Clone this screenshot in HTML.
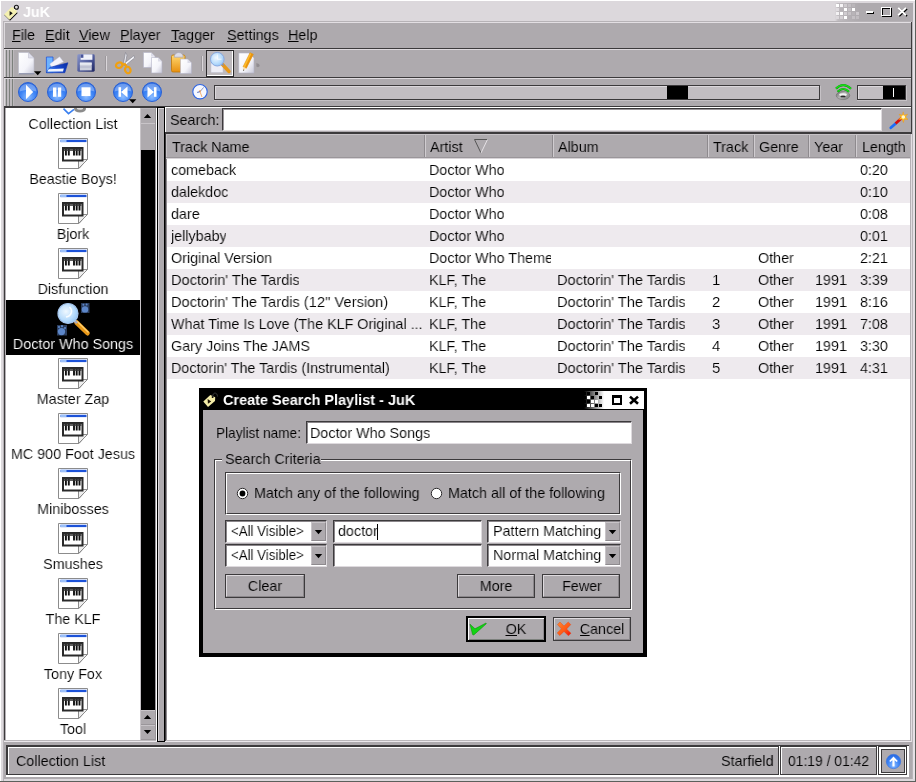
<!DOCTYPE html>
<html><head><meta charset="utf-8">
<style>
*{box-sizing:border-box;margin:0;padding:0}
html,body{width:916px;height:782px;overflow:hidden;background:#aeaaae}
body{font-family:"Liberation Sans",sans-serif;font-size:15px;color:#000;position:relative}
.a{position:absolute}
.t{position:absolute;white-space:nowrap;line-height:18px;height:18px;transform:scaleX(.955);transform-origin:0 0}
.t,.tc{-webkit-text-stroke:0.12px #aeaaae;will-change:transform}
.w{-webkit-text-stroke-color:#fff}
.al{-webkit-text-stroke-color:#eeeaee}
.k{-webkit-text-stroke-color:#000}
.ns{-webkit-text-stroke-width:0}
.tc{position:absolute;white-space:nowrap;line-height:18px;height:18px;width:300px;text-align:center;transform:scaleX(.955);transform-origin:50% 0}
u{text-decoration:none;background:linear-gradient(#000,#000) 0 15px/100% 1px no-repeat}
svg{overflow:visible}
</style></head><body>
<div class="a" style="left:0px;top:0px;width:915px;height:1px;background:#fff;"></div>
<div class="a" style="left:0px;top:0px;width:1px;height:781px;background:#fff;"></div>
<div class="a" style="left:1px;top:1px;width:914px;height:2px;background:#dcd8dc;"></div>
<div class="a" style="left:1px;top:1px;width:2px;height:780px;background:#dcd8dc;"></div>
<div class="a" style="left:3px;top:22px;width:1px;height:758px;background:#c6c2c6;"></div>
<div class="a" style="left:912px;top:22px;width:1px;height:758px;background:#b8b4b8;"></div>
<div class="a" style="left:913px;top:1px;width:2px;height:780px;background:#e4e0e4;"></div>
<div class="a" style="left:1px;top:779px;width:914px;height:2px;background:#dcd8dc;"></div>
<div class="a" style="left:915px;top:0px;width:1px;height:782px;background:#5c605c;"></div>
<div class="a" style="left:0px;top:781px;width:916px;height:1px;background:#5c605c;"></div>
<div class="a" style="left:1px;top:3px;width:912px;height:19px;background:#dcd8dc;"></div>
<div class="a" style="left:835px;top:3px;width:78px;height:19px;background:#aeaaae;background:linear-gradient(90deg,#dcd8dc 0px,#c0bcc0 3px,#b4b0b4 14px,#aeaaae 24px,#aeaaae 100%);"></div>
<div class="a" style="left:836px;top:4px;width:3px;height:3px;background:#fff;"></div>
<div class="a" style="left:840px;top:4px;width:3px;height:3px;background:#f6f4f6;"></div>
<div class="a" style="left:844px;top:4px;width:3px;height:3px;background:#cfcbcf;"></div>
<div class="a" style="left:848px;top:4px;width:3px;height:3px;background:#c4c0c4;"></div>
<div class="a" style="left:852px;top:4px;width:3px;height:3px;background:#bab6ba;"></div>
<div class="a" style="left:836px;top:8px;width:3px;height:3px;background:#e0dce0;"></div>
<div class="a" style="left:840px;top:8px;width:3px;height:3px;background:#b8b4b8;"></div>
<div class="a" style="left:844px;top:8px;width:3px;height:3px;background:#fff;"></div>
<div class="a" style="left:848px;top:8px;width:3px;height:3px;background:#c6c2c6;"></div>
<div class="a" style="left:852px;top:8px;width:3px;height:3px;background:#fff;"></div>
<div class="a" style="left:836px;top:12px;width:3px;height:3px;background:#f4f2f4;"></div>
<div class="a" style="left:840px;top:12px;width:3px;height:3px;background:#fff;"></div>
<div class="a" style="left:844px;top:12px;width:3px;height:3px;background:#d0ccd0;"></div>
<div class="a" style="left:848px;top:12px;width:3px;height:3px;background:#c8c4c8;"></div>
<div class="a" style="left:852px;top:12px;width:3px;height:3px;background:#b8b4b8;"></div>
<div class="a" style="left:856px;top:12px;width:3px;height:3px;background:#ccc8cc;"></div>
<div class="a" style="left:836px;top:16px;width:3px;height:3px;background:#dcd8dc;"></div>
<div class="a" style="left:840px;top:16px;width:3px;height:3px;background:#d4d0d4;"></div>
<div class="a" style="left:844px;top:16px;width:3px;height:3px;background:#fff;"></div>
<div class="a" style="left:848px;top:16px;width:3px;height:3px;background:#b4b0b4;"></div>
<div class="a" style="left:852px;top:16px;width:3px;height:3px;background:#c4c0c4;"></div>
<div class="a" style="left:856px;top:16px;width:3px;height:3px;background:#c0bcc0;"></div>
<div class="t ns" style="left:23px;top:3px;font-weight:bold;color:#fff;font-size:15px">JuK</div>
<svg class="a" style="left:0px;top:0px" width="22" height="22" viewBox="0 0 22 22"><path d="M4.6 14.6 L10 20 L17.3 12.6" fill="none" stroke="#111" stroke-width="1.1"/><path d="M4 14.4 L11.5 7.1 L16.1 8.8 L16.9 12.3 L9.4 19.8 Z" fill="#f4f0b0"/><path d="M9.6 11.1 L12.7 13.3 L9.6 15.7 Z" fill="#111"/><circle cx="16.4" cy="7.2" r="2" fill="none" stroke="#111" stroke-width="1.1"/><circle cx="14.6" cy="9.6" r="0.7" fill="#fff"/></svg>
<div class="a" style="left:867px;top:12px;width:7px;height:2px;background:#000;"></div>
<div class="a" style="left:866px;top:11px;width:7px;height:2px;background:#fff;"></div>
<div class="a" style="left:882px;top:8px;width:10px;height:9px;border:1px solid #000"></div>
<div class="a" style="left:881px;top:7px;width:10px;height:9px;border:1px solid #fff"></div>
<div class="a" style="left:882px;top:8px;width:1px;height:7px;background:#000;"></div>
<div class="a" style="left:882px;top:8px;width:8px;height:1px;background:#000;"></div>
<svg class="a" style="left:898px;top:8px" width="10" height="9" viewBox="0 0 10 9"><path d="M1.2 0.8 L9 8.2 M9 0.8 L1.2 8.2" stroke="#000" stroke-width="1.7"/><path d="M0.2 -0.1 L8 7.3 M8 -0.1 L0.2 7.3" stroke="#fff" stroke-width="1.9"/></svg>
<div class="a" style="left:3px;top:21px;width:909px;height:1px;background:#b6b2b6;"></div>
<div class="a" style="left:4px;top:22px;width:908px;height:1px;background:#e2dee2;"></div>
<div class="a" style="left:3px;top:21px;width:1px;height:760px;background:#b6b2b6;"></div>
<div class="a" style="left:4px;top:22px;width:1px;height:85px;background:#dcd8dc;"></div>
<div class="a" style="left:4px;top:48px;width:908px;height:1px;background:#3c3a3c;"></div>
<div class="a" style="left:911px;top:22px;width:1px;height:112px;background:#3c3a3c;"></div>
<div class="t" style="left:12px;top:26px;"><u>F</u>ile</div>
<div class="t" style="left:45px;top:26px;"><u>E</u>dit</div>
<div class="t" style="left:79px;top:26px;"><u>V</u>iew</div>
<div class="t" style="left:120px;top:26px;"><u>P</u>layer</div>
<div class="t" style="left:171px;top:26px;"><u>T</u>agger</div>
<div class="t" style="left:227px;top:26px;"><u>S</u>ettings</div>
<div class="t" style="left:288px;top:26px;"><u>H</u>elp</div>
<div class="a" style="left:4px;top:49px;width:907px;height:1px;background:#dedade;"></div>
<div class="a" style="left:4px;top:77px;width:907px;height:1px;background:#3c3a3c;"></div>
<div class="a" style="left:4px;top:78px;width:907px;height:1px;background:#dedade;"></div>
<div class="a" style="left:4px;top:106px;width:908px;height:1px;background:#3c3a3c;"></div>
<div class="a" style="left:166px;top:107px;width:745px;height:1px;background:#dedade;"></div>
<div class="a" style="left:5px;top:50px;width:9px;height:27px;background:#bcb8bc;"></div>
<div class="a" style="left:6px;top:50px;width:1px;height:27px;background:#7c807c;"></div>
<div class="a" style="left:9px;top:50px;width:1px;height:27px;background:#7c807c;"></div>
<div class="a" style="left:12px;top:50px;width:1px;height:27px;background:#7c807c;"></div>
<div class="a" style="left:5px;top:79px;width:9px;height:27px;background:#bcb8bc;"></div>
<div class="a" style="left:6px;top:79px;width:1px;height:27px;background:#7c807c;"></div>
<div class="a" style="left:9px;top:79px;width:1px;height:27px;background:#7c807c;"></div>
<div class="a" style="left:12px;top:79px;width:1px;height:27px;background:#7c807c;"></div>
<div class="a" style="left:105px;top:56px;width:1px;height:15px;background:#9c989c;"></div>
<div class="a" style="left:106px;top:56px;width:1px;height:15px;background:#dad6da;"></div>
<div class="a" style="left:201px;top:56px;width:1px;height:15px;background:#9c989c;"></div>
<div class="a" style="left:202px;top:56px;width:1px;height:15px;background:#dad6da;"></div>
<svg width="0" height="0" style="position:absolute"><defs>
<linearGradient id="gpage" x1="0" y1="0" x2="1" y2="1"><stop offset="0" stop-color="#fff"/><stop offset="0.6" stop-color="#f4f4fa"/><stop offset="1" stop-color="#c8c8d8"/></linearGradient>
<linearGradient id="gfold2" x1="0" y1="0.6" x2="1" y2="0.3"><stop offset="0" stop-color="#5aa0f8"/><stop offset="0.45" stop-color="#1c50d8"/><stop offset="1" stop-color="#0a30a8"/></linearGradient>
<linearGradient id="gfold" x1="0" y1="0" x2="0" y2="1"><stop offset="0" stop-color="#2a5ad0"/><stop offset="0.5" stop-color="#0a34b0"/><stop offset="1" stop-color="#5a90f0"/></linearGradient>
<linearGradient id="gflop" x1="0" y1="0" x2="1" y2="1"><stop offset="0" stop-color="#8c98cc"/><stop offset="0.5" stop-color="#5460a0"/><stop offset="1" stop-color="#1c2460"/></linearGradient>
<linearGradient id="gor" x1="0" y1="0" x2="0" y2="1"><stop offset="0" stop-color="#ffd870"/><stop offset="1" stop-color="#e89010"/></linearGradient>
<linearGradient id="gx" x1="0" y1="0" x2="1" y2="1"><stop offset="0" stop-color="#ff8a30"/><stop offset="0.55" stop-color="#ff5a14"/><stop offset="1" stop-color="#f40808"/></linearGradient>
<linearGradient id="gspk" x1="0" y1="0" x2="1" y2="0.6"><stop offset="0" stop-color="#686868"/><stop offset="0.5" stop-color="#b4b4b4"/><stop offset="1" stop-color="#8a8a8a"/></linearGradient>
<radialGradient id="gball" cx="0.5" cy="0.75" r="0.75"><stop offset="0" stop-color="#8cbcff"/><stop offset="0.5" stop-color="#3f86f6"/><stop offset="1" stop-color="#2466e0"/></radialGradient>
<radialGradient id="glens" cx="0.4" cy="0.4" r="0.7"><stop offset="0" stop-color="#f0f8ff"/><stop offset="0.6" stop-color="#b8dcfc"/><stop offset="1" stop-color="#8cc0f4"/></radialGradient>
<g id="ball"><circle cx="10" cy="10" r="9.5" fill="url(#gball)" stroke="#2a60d4" stroke-width="1"/><path d="M1.6 9.6 C1.6 -1 18.4 -1 18.4 9.6 C14 7.4 6 7.4 1.6 9.6 Z" fill="#fff" opacity="0.3"/></g>
<g id="pl"><path d="M0.5 0.5 H29.5 V21 L21 30.5 H0.5 Z" fill="#fff" stroke="#8c8c8c" stroke-width="1"/><path d="M29.5 21.5 H20.5 V30.5 Z" fill="#eee" stroke="#8c8c8c" stroke-width="1" stroke-linejoin="round"/><rect x="2.5" y="1.8" width="26" height="2.3" fill="#1c52d8"/><rect x="2.5" y="1.8" width="6" height="2.3" fill="#9cc0f8"/><rect x="4" y="9" width="21.5" height="14.5" fill="#2a2a2a"/><rect x="6" y="11" width="17.5" height="10.5" fill="#fff"/><path d="M7.9 11 v6.6 M10.8 11 v6.6 M16 11 v6.6 M18.7 11 v6.6 M21.5 11 v6.6" stroke="#111" stroke-width="1.9"/><rect x="6" y="10.5" width="17.5" height="2.5" fill="#333" opacity="0.8"/></g>
</defs></svg>
<svg class="a" style="left:18px;top:52px" width="17" height="22" viewBox="0 0 17 22"><path d="M0.5 0.5 H10.5 L16 6 V21.5 H0.5 Z" fill="url(#gpage)" stroke="#b8b8c8" stroke-width="0.6"/><path d="M10.5 0.5 V6 H16 Z" fill="#e0e0ec" stroke="#b8b8c8" stroke-width="0.5"/><path d="M1 21.8 H16.3" stroke="#7880a0" stroke-width="0.8"/></svg>
<svg class="a" style="left:34px;top:71px" width="8" height="5" viewBox="0 0 8 5"><path d="M0 0.3 H7.4 L3.7 4.3 Z" fill="#000"/></svg>
<svg class="a" style="left:46px;top:54px" width="23" height="19" viewBox="0 0 23 19"><path d="M0.4 3 H7 V18.6 H0.4 Z" fill="#6cb2ff" stroke="#1a4cd8" stroke-width="0.7"/><path d="M3.8 10 L13.6 2.8 L17.5 7.8 L5.8 13.6 Z" fill="#f4f4fc" stroke="#c4c8e0" stroke-width="0.4"/><path d="M3.9 13.4 L21.9 8.8 L18.8 18.7 H0.4 Z" fill="url(#gfold2)" stroke="#0c30b0" stroke-width="0.6" stroke-linejoin="round"/><path d="M2.6 15.2 L17.8 14.6 L17 17.4 L1.4 17.4 Z" fill="#eef4ff"/></svg>
<svg class="a" style="left:77px;top:54px" width="18" height="18" viewBox="0 0 18 18"><rect x="0.3" y="0.3" width="17.4" height="17.4" rx="1.4" fill="url(#gflop)"/><rect x="3.6" y="0.4" width="11.8" height="5.4" fill="#f0f2fa"/><rect x="3.6" y="0.4" width="2.8" height="3.4" fill="#48549a"/><rect x="2.9" y="8.6" width="11.8" height="7.8" fill="#cdd0dc"/><rect x="2.9" y="8.6" width="11.8" height="2.2" fill="#e8eaf2"/><path d="M2.9 13 H14.7" stroke="#a8acc4" stroke-width="0.8"/></svg>
<svg class="a" style="left:115px;top:52px" width="20" height="22" viewBox="0 0 20 22"><path d="M10.5 0.5 L8.2 12.5 L10 13.5 L12 3 Z" fill="#e8e8ee" stroke="#80808c" stroke-width="0.6"/><path d="M19 3.5 L9 11.5 L10.2 13.5 L19.5 6 Z" fill="#f4f4f8" stroke="#80808c" stroke-width="0.6"/><ellipse cx="4.2" cy="13.2" rx="3.3" ry="2.7" fill="none" stroke="#f0a010" stroke-width="2.2" transform="rotate(-20 4.2 13.2)"/><ellipse cx="12.8" cy="18" rx="2.7" ry="3.3" fill="none" stroke="#f0a010" stroke-width="2.2" transform="rotate(-25 12.8 18)"/><path d="M6.8 12.5 L10 12.2 L11.8 15" fill="none" stroke="#f0a010" stroke-width="2.2"/></svg>
<svg class="a" style="left:143px;top:52px" width="20" height="22" viewBox="0 0 20 22"><path d="M0.5 0.5 H8 L12 4.5 V15.5 H0.5 Z" fill="url(#gpage)" stroke="#b4b4c8" stroke-width="0.6"/><path d="M8 0.5 V4.5 H12 Z" fill="#dcdce8"/><path d="M8.5 5.5 H15 L19 9.5 V21 H8.5 Z" fill="url(#gpage)" stroke="#b4b4c8" stroke-width="0.6"/><path d="M15 5.5 V9.5 H19 Z" fill="#dcdce8"/></svg>
<svg class="a" style="left:171px;top:52px" width="22" height="22" viewBox="0 0 22 22"><rect x="0.5" y="3" width="13.5" height="17" rx="1.5" fill="url(#gor)" stroke="#c07808" stroke-width="0.8"/><path d="M3.2 5.2 C3.2 -1 12.2 -1 12.2 5.2 Z" fill="#dcdce6" stroke="#a0a0b0" stroke-width="0.6"/><path d="M9.5 7 H16.5 L20.5 11 V21.5 H9.5 Z" fill="url(#gpage)" stroke="#b4b4c8" stroke-width="0.6"/><path d="M16.5 7 V11 H20.5 Z" fill="#dcdce8"/></svg>
<div class="a" style="left:206px;top:50px;width:28px;height:27px;background:#bebabe;border:1px solid #2c2a2c;"></div>
<div class="a" style="left:207px;top:75px;width:26px;height:1px;background:#fff;"></div>
<div class="a" style="left:232px;top:51px;width:1px;height:25px;background:#fff;"></div>
<svg class="a" style="left:208px;top:52px" width="26" height="24" viewBox="0 0 26 24"><path d="M3 10 H15 V20.5 H3 Z" fill="#eeeef6" stroke="#c0c0d0" stroke-width="0.5"/><path d="M14.5 12.5 L21 19.5" stroke="#e89818" stroke-width="3.4" stroke-linecap="round"/><path d="M13 11 L15.5 13.5" stroke="#9090a0" stroke-width="2"/><circle cx="9.3" cy="7.2" r="6.8" fill="url(#glens)" stroke="#88a8e0" stroke-width="1"/><path d="M9.3 7.2 V2.5 M9.3 7.2 H13.5" stroke="#fff" stroke-width="0.9" opacity="0.9"/></svg>
<svg class="a" style="left:238px;top:52px" width="20" height="22" viewBox="0 0 20 22"><path d="M0.8 1 H11 L16 6 V21 H0.8 Z" fill="url(#gpage)" stroke="#b4b4c8" stroke-width="0.6"/><path d="M12 0.8 L15.3 2.3 L8.3 16.3 L5 14.8 Z" fill="#ffbc28" stroke="#d88408" stroke-width="0.5"/><path d="M13.4 1.4 L15.3 2.3 L8.3 16.3 L6.9 15.6 Z" fill="#e89410"/><path d="M5 14.8 L8.3 16.3 L5.2 19 Z" fill="#f8e0b0"/><path d="M5.3 17.6 L6.3 18 L5.2 19 Z" fill="#222"/><path d="M18.4 11 L21 12 L21.8 14 L20 15.2 L18.4 14.6 Z" fill="#918d91"/></svg>
<svg class="a" style="left:18px;top:82px" width="20" height="20" viewBox="0 0 20 20"><use href="#ball"/><path d="M8 2.8 L15.2 10 L8 17.2 Z" fill="#fff"/></svg>
<svg class="a" style="left:47px;top:82px" width="20" height="20" viewBox="0 0 20 20"><use href="#ball"/><rect x="6" y="5.5" width="3.4" height="9.3" fill="#fff"/><rect x="10.9" y="5.5" width="3.3" height="9.3" fill="#fff"/></svg>
<svg class="a" style="left:76px;top:82px" width="20" height="20" viewBox="0 0 20 20"><use href="#ball"/><rect x="5.5" y="5.3" width="9" height="8.8" fill="#fff"/></svg>
<svg class="a" style="left:113px;top:82px" width="20" height="20" viewBox="0 0 20 20"><use href="#ball"/><rect x="5.5" y="5.2" width="2.6" height="9.6" fill="#fff"/><path d="M14.5 4.5 L8 10 L14.5 15.5 Z" fill="#fff"/></svg>
<svg class="a" style="left:129px;top:99px" width="8" height="5" viewBox="0 0 8 5"><path d="M0 0.3 H7.4 L3.7 4.3 Z" fill="#000"/></svg>
<svg class="a" style="left:142px;top:82px" width="20" height="20" viewBox="0 0 20 20"><use href="#ball"/><rect x="11.9" y="5.2" width="2.6" height="9.6" fill="#fff"/><path d="M5.5 4.5 L12 10 L5.5 15.5 Z" fill="#fff"/></svg>
<svg class="a" style="left:192px;top:83px" width="17" height="17" viewBox="0 0 17 17"><circle cx="8" cy="8.7" r="7.2" fill="#f6f8fe" stroke="#2c64e4" stroke-width="1.1"/><path d="M8 8.7 L11.6 4.4" stroke="#7080b0" stroke-width="0.8"/><path d="M8 8.7 L10 14" stroke="#f4a050" stroke-width="0.8"/><path d="M8 8.7 L5.2 9.4" stroke="#4868c0" stroke-width="1"/><circle cx="8" cy="8" r="0.8" fill="#f08020"/></svg>
<div class="a" style="left:214px;top:85px;width:606px;height:15px;background:#c2bec2;border:1px solid #3c3a3c;"></div>
<div class="a" style="left:215px;top:86px;width:604px;height:1px;background:#dcd8dc;"></div>
<div class="a" style="left:215px;top:86px;width:1px;height:13px;background:#dcd8dc;"></div>
<div class="a" style="left:214px;top:100px;width:607px;height:1px;background:#c6c2c6;"></div>
<div class="a" style="left:820px;top:86px;width:1px;height:15px;background:#c6c2c6;"></div>
<div class="a" style="left:667px;top:86px;width:21px;height:13px;background:#000;"></div>
<svg class="a" style="left:835px;top:83px" width="17" height="18" viewBox="0 0 17 18"><ellipse cx="8" cy="12.5" rx="6.8" ry="4.1" fill="url(#gspk)" stroke="#6c6c6c" stroke-width="0.5"/><ellipse cx="8" cy="11.7" rx="3.8" ry="1.4" fill="#f4f4f4"/><ellipse cx="8" cy="13.4" rx="2.6" ry="0.9" fill="#2a2a2a"/><path d="M1 5.6 Q8.2 -1.4 16 5.8" fill="none" stroke="#0c8c0c" stroke-width="2.2"/><path d="M1 5.5 Q8.2 -1.5 16 5.7" fill="none" stroke="#18e018" stroke-width="1.3"/><path d="M2.6 8.8 Q8 3 14 8.8" fill="none" stroke="#0c8c0c" stroke-width="2"/><path d="M2.6 8.7 Q8 2.9 14 8.7" fill="none" stroke="#18e018" stroke-width="1.2"/></svg>
<div class="a" style="left:857px;top:85px;width:49px;height:15px;background:#c2bec2;border:1px solid #3c3a3c;"></div>
<div class="a" style="left:858px;top:86px;width:47px;height:1px;background:#dcd8dc;"></div>
<div class="a" style="left:858px;top:86px;width:1px;height:13px;background:#dcd8dc;"></div>
<div class="a" style="left:857px;top:100px;width:50px;height:1px;background:#c6c2c6;"></div>
<div class="a" style="left:906px;top:86px;width:1px;height:15px;background:#c6c2c6;"></div>
<div class="a" style="left:883px;top:86px;width:22px;height:13px;background:#000;"></div>
<div class="a" style="left:893px;top:88px;width:1px;height:9px;background:#fff;"></div>
<div class="a" style="left:4px;top:107px;width:153px;height:1px;background:#3c3a3c;"></div>
<div class="a" style="left:4px;top:107px;width:1px;height:634px;background:#3c3a3c;"></div>
<div class="a" style="left:5px;top:108px;width:1px;height:632px;background:#b4b0b4;"></div>
<div class="a" style="left:6px;top:108px;width:150px;height:632px;background:#fff;"></div>
<div class="a" style="left:4px;top:740px;width:908px;height:1px;background:#bcb8bc;"></div>
<div class="a" style="left:4px;top:741px;width:908px;height:1px;background:#ece8ec;"></div>
<div class="a" style="left:6px;top:108px;width:135px;height:632px;overflow:hidden">
<svg class="a" style="left:48px;top:-25px" width="36" height="31" viewBox="0 0 36 31"><path d="M9.5 25.6 L14.5 30.6 L20 26.4" fill="none" stroke="#3a80f0" stroke-width="1.6"/><ellipse cx="26" cy="26" rx="6" ry="3.4" fill="#8c8c8c"/><ellipse cx="26" cy="25.4" rx="3" ry="1.4" fill="#e0e0e0"/></svg>
<div class="tc w" style="left:-83px;top:7px;">Collection List</div>
<svg class="a" style="left:52px;top:30px" width="30" height="31" viewBox="0 0 30 31"><use href="#pl"/></svg>
<div class="tc w" style="left:-83px;top:62px;">Beastie Boys!</div>
<svg class="a" style="left:52px;top:85px" width="30" height="31" viewBox="0 0 30 31"><use href="#pl"/></svg>
<div class="tc w" style="left:-83px;top:117px;">Bjork</div>
<svg class="a" style="left:52px;top:140px" width="30" height="31" viewBox="0 0 30 31"><use href="#pl"/></svg>
<div class="tc w" style="left:-83px;top:172px;">Disfunction</div>
<div class="a" style="left:0px;top:192px;width:135px;height:55px;background:#000;"></div>
<svg class="a" style="left:46px;top:193px" width="40" height="38" viewBox="0 0 40 38"><rect x="29" y="2" width="8.5" height="10" fill="#2a3c5c"/><circle cx="33" cy="8.4" r="3.2" fill="#5c86c8"/><circle cx="31.4" cy="3.8" r="1" fill="#5c86c8"/><circle cx="34.6" cy="3.6" r="1" fill="#5c86c8"/><rect x="5" y="24" width="10" height="10.5" fill="#2a3c5c"/><circle cx="9.5" cy="30.6" r="3.6" fill="#5c86c8"/><circle cx="7" cy="26" r="1.1" fill="#5c86c8"/><circle cx="10" cy="25.2" r="1.1" fill="#5c86c8"/><circle cx="13" cy="27" r="1.1" fill="#5c86c8"/><path d="M24.5 21.5 L35.5 32.2" stroke="#e89818" stroke-width="4.6" stroke-linecap="round"/><path d="M25 20.2 L36.2 31.2" stroke="#ffd070" stroke-width="1.2" stroke-linecap="round"/><path d="M22.3 19.5 L25 22.2" stroke="#a8a8b8" stroke-width="2.6"/><circle cx="16" cy="12.5" r="10" fill="url(#glens)" stroke="#a8c8f0" stroke-width="1.2"/><path d="M17.5 6 C21 9 20 15 14 16" fill="none" stroke="#fff" stroke-width="1.6" opacity="0.85"/></svg>
<div class="tc k" style="left:-83px;top:226.5px;color:#fff">Doctor Who Songs</div>
<svg class="a" style="left:52px;top:250px" width="30" height="31" viewBox="0 0 30 31"><use href="#pl"/></svg>
<div class="tc w" style="left:-83px;top:282px;">Master Zap</div>
<svg class="a" style="left:52px;top:305px" width="30" height="31" viewBox="0 0 30 31"><use href="#pl"/></svg>
<div class="tc w" style="left:-83px;top:337px;">MC 900 Foot Jesus</div>
<svg class="a" style="left:52px;top:360px" width="30" height="31" viewBox="0 0 30 31"><use href="#pl"/></svg>
<div class="tc w" style="left:-83px;top:392px;">Minibosses</div>
<svg class="a" style="left:52px;top:415px" width="30" height="31" viewBox="0 0 30 31"><use href="#pl"/></svg>
<div class="tc w" style="left:-83px;top:447px;">Smushes</div>
<svg class="a" style="left:52px;top:470px" width="30" height="31" viewBox="0 0 30 31"><use href="#pl"/></svg>
<div class="tc w" style="left:-83px;top:502px;">The KLF</div>
<svg class="a" style="left:52px;top:525px" width="30" height="31" viewBox="0 0 30 31"><use href="#pl"/></svg>
<div class="tc w" style="left:-83px;top:557px;">Tony Fox</div>
<svg class="a" style="left:52px;top:580px" width="30" height="31" viewBox="0 0 30 31"><use href="#pl"/></svg>
<div class="tc w" style="left:-83px;top:612px;">Tool</div>
</div>
<div class="a" style="left:140px;top:108px;width:16px;height:632px;background:#aeaaae;"></div>
<div class="a" style="left:140px;top:108px;width:1px;height:632px;background:#c8c4c8;"></div>
<div class="a" style="left:141px;top:150px;width:14px;height:560px;background:#000;"></div>
<div class="a" style="left:141px;top:123px;width:14px;height:1px;background:#c8c4c8;"></div>
<div class="a" style="left:141px;top:108px;width:14px;height:1px;background:#bcb8bc;"></div>
<svg class="a" style="left:144px;top:114px" width="7" height="4" viewBox="0 0 7 4"><path d="M3.5 0 L7.2 4 H-0.2 Z" fill="#000"/></svg>
<div class="a" style="left:141px;top:710px;width:14px;height:1px;background:#c8c4c8;"></div>
<div class="a" style="left:141px;top:725px;width:14px;height:1px;background:#c8c4c8;"></div>
<div class="a" style="left:141px;top:724px;width:14px;height:1px;background:#9a969a;"></div>
<div class="a" style="left:141px;top:739px;width:14px;height:1px;background:#9a969a;"></div>
<div class="a" style="left:155px;top:108px;width:1px;height:632px;background:#9a969a;"></div>
<svg class="a" style="left:144px;top:715px" width="7" height="4" viewBox="0 0 7 4"><path d="M3.5 0 L7.2 4 H-0.2 Z" fill="#000"/></svg>
<svg class="a" style="left:144px;top:730px" width="7" height="4" viewBox="0 0 7 4"><path d="M-0.2 0 H7.2 L3.5 4 Z" fill="#000"/></svg>
<div class="a" style="left:156px;top:108px;width:1px;height:633px;background:#fff;"></div>
<div class="a" style="left:157px;top:107px;width:8px;height:635px;background:#000;"></div>
<div class="a" style="left:158px;top:108px;width:6px;height:633px;background:#aeaaae;"></div>
<div class="a" style="left:158px;top:108px;width:1px;height:633px;background:#dcd8dc;"></div>
<div class="a" style="left:158px;top:108px;width:6px;height:1px;background:#dcd8dc;"></div>
<div class="a" style="left:165px;top:107px;width:746px;height:1px;background:#fff;"></div>
<div class="a" style="left:165px;top:107px;width:1px;height:25px;background:#fff;"></div>
<div class="t" style="left:169.5px;top:111.3px;">Search:</div>
<div class="a" style="left:222px;top:108px;width:660px;height:23px;background:#fff;border:1px solid;border-color:#3c3a3c #dedade #dedade #3c3a3c;"></div>
<div class="a" style="left:223px;top:109px;width:658px;height:1px;background:#9a969a;"></div>
<div class="a" style="left:223px;top:109px;width:1px;height:21px;background:#9a969a;"></div>
<svg class="a" style="left:889px;top:111px" width="20" height="19" viewBox="0 0 20 19"><path d="M1.8 16.8 L7 12.2" stroke="#1c6cf8" stroke-width="2.8" stroke-linecap="round"/><path d="M6.6 12.6 L12.4 7.2" stroke="#d80c0c" stroke-width="2.8"/><path d="M14.2 0.8 L15 4.2 L18.6 3.2 L16.4 6 L19 8.4 L15.4 8.2 L14.4 11.6 L13.2 8.2 L9.6 8.6 L12.2 6 L10 3.2 L13.4 4.2 Z" fill="#ffc020" stroke="#f09010" stroke-width="0.4"/><circle cx="14.3" cy="6" r="1.8" fill="#fff8d0"/></svg>
<div class="a" style="left:165px;top:132px;width:746px;height:2px;background:#3c3a3c;"></div>
<div class="a" style="left:165px;top:134px;width:1px;height:607px;background:#3c3a3c;"></div>
<div class="a" style="left:166px;top:134px;width:1px;height:606px;background:#8e8a8e;"></div>
<div class="a" style="left:167px;top:134px;width:743px;height:606px;background:#fff;"></div>
<div class="a" style="left:166px;top:134px;width:744px;height:24px;background:#aeaaae;"></div>
<div class="a" style="left:166px;top:134px;width:744px;height:1px;background:#c6c2c6;"></div>
<div class="a" style="left:166px;top:134px;width:1px;height:24px;background:#c6c2c6;"></div>
<div class="a" style="left:166px;top:157px;width:744px;height:1px;background:#9a969a;"></div>
<div class="a" style="left:166px;top:158px;width:744px;height:1px;background:#d8d4d8;"></div>
<div class="t" style="left:171.7px;top:137.7px;">Track Name</div>
<div class="a" style="left:424px;top:135px;width:1px;height:22px;background:#8e8a8e;"></div>
<div class="a" style="left:425px;top:135px;width:1px;height:22px;background:#d0ccd0;"></div>
<div class="t" style="left:430px;top:137.7px;">Artist</div>
<div class="a" style="left:552px;top:135px;width:1px;height:22px;background:#8e8a8e;"></div>
<div class="a" style="left:553px;top:135px;width:1px;height:22px;background:#d0ccd0;"></div>
<div class="t" style="left:558px;top:137.7px;">Album</div>
<div class="a" style="left:707px;top:135px;width:1px;height:22px;background:#8e8a8e;"></div>
<div class="a" style="left:708px;top:135px;width:1px;height:22px;background:#d0ccd0;"></div>
<div class="t" style="left:713px;top:137.7px;">Track</div>
<div class="a" style="left:753px;top:135px;width:1px;height:22px;background:#8e8a8e;"></div>
<div class="a" style="left:754px;top:135px;width:1px;height:22px;background:#d0ccd0;"></div>
<div class="t" style="left:759px;top:137.7px;">Genre</div>
<div class="a" style="left:808px;top:135px;width:1px;height:22px;background:#8e8a8e;"></div>
<div class="a" style="left:809px;top:135px;width:1px;height:22px;background:#d0ccd0;"></div>
<div class="t" style="left:814px;top:137.7px;">Year</div>
<div class="a" style="left:855px;top:135px;width:1px;height:22px;background:#8e8a8e;"></div>
<div class="a" style="left:856px;top:135px;width:1px;height:22px;background:#d0ccd0;"></div>
<div class="t" style="left:862px;top:137.7px;">Length</div>
<svg class="a" style="left:474px;top:139px" width="14" height="15" viewBox="0 0 14 15"><path d="M0.5 0.5 H13.5" stroke="#555" stroke-width="1"/><path d="M0.5 0.5 L7 14" stroke="#555" stroke-width="1"/><path d="M13.5 0.5 L7 14" stroke="#e6e2e6" stroke-width="1"/></svg>
<div class="t w" style="left:170.7px;top:160.6px;max-width:263.8743455497382px;overflow:hidden;">comeback</div>
<div class="t w" style="left:428.5px;top:160.6px;max-width:127.74869109947645px;overflow:hidden;">Doctor Who</div>
<div class="t w" style="left:859.5px;top:160.6px;max-width:48.16753926701571px;overflow:hidden;">0:20</div>
<div class="a" style="left:167px;top:181px;width:743px;height:22px;background:#eeeaee;"></div>
<div class="t al" style="left:170.7px;top:182.6px;max-width:263.8743455497382px;overflow:hidden;">dalekdoc</div>
<div class="t al" style="left:428.5px;top:182.6px;max-width:127.74869109947645px;overflow:hidden;">Doctor Who</div>
<div class="t al" style="left:859.5px;top:182.6px;max-width:48.16753926701571px;overflow:hidden;">0:10</div>
<div class="t w" style="left:170.7px;top:204.6px;max-width:263.8743455497382px;overflow:hidden;">dare</div>
<div class="t w" style="left:428.5px;top:204.6px;max-width:127.74869109947645px;overflow:hidden;">Doctor Who</div>
<div class="t w" style="left:859.5px;top:204.6px;max-width:48.16753926701571px;overflow:hidden;">0:08</div>
<div class="a" style="left:167px;top:225px;width:743px;height:22px;background:#eeeaee;"></div>
<div class="t al" style="left:170.7px;top:226.6px;max-width:263.8743455497382px;overflow:hidden;">jellybaby</div>
<div class="t al" style="left:428.5px;top:226.6px;max-width:127.74869109947645px;overflow:hidden;">Doctor Who</div>
<div class="t al" style="left:859.5px;top:226.6px;max-width:48.16753926701571px;overflow:hidden;">0:01</div>
<div class="t w" style="left:170.7px;top:248.60000000000002px;max-width:263.8743455497382px;overflow:hidden;">Original Version</div>
<div class="t w" style="left:428.5px;top:248.60000000000002px;max-width:127.74869109947645px;overflow:hidden;">Doctor Who Theme</div>
<div class="t w" style="left:758px;top:248.60000000000002px;max-width:52.35602094240838px;overflow:hidden;">Other</div>
<div class="t w" style="left:859.5px;top:248.60000000000002px;max-width:48.16753926701571px;overflow:hidden;">2:21</div>
<div class="a" style="left:167px;top:269px;width:743px;height:22px;background:#eeeaee;"></div>
<div class="t al" style="left:170.7px;top:270.6px;max-width:263.8743455497382px;overflow:hidden;transform:scaleX(0.973);">Doctorin' The Tardis</div>
<div class="t al" style="left:428.5px;top:270.6px;max-width:127.74869109947645px;overflow:hidden;">KLF, The</div>
<div class="t al" style="left:556.5px;top:270.6px;max-width:157.06806282722513px;overflow:hidden;transform:scaleX(0.973);">Doctorin' The Tardis</div>
<div class="t al" style="left:712px;top:270.6px;max-width:41.88481675392671px;overflow:hidden;">1</div>
<div class="t al" style="left:758px;top:270.6px;max-width:52.35602094240838px;overflow:hidden;">Other</div>
<div class="t al" style="left:815.3px;top:270.6px;max-width:46.07329842931937px;overflow:hidden;">1991</div>
<div class="t al" style="left:859.5px;top:270.6px;max-width:48.16753926701571px;overflow:hidden;">3:39</div>
<div class="t w" style="left:170.7px;top:292.6px;max-width:263.8743455497382px;overflow:hidden;transform:scaleX(0.973);">Doctorin' The Tardis (12'' Version)</div>
<div class="t w" style="left:428.5px;top:292.6px;max-width:127.74869109947645px;overflow:hidden;">KLF, The</div>
<div class="t w" style="left:556.5px;top:292.6px;max-width:157.06806282722513px;overflow:hidden;transform:scaleX(0.973);">Doctorin' The Tardis</div>
<div class="t w" style="left:712px;top:292.6px;max-width:41.88481675392671px;overflow:hidden;">2</div>
<div class="t w" style="left:758px;top:292.6px;max-width:52.35602094240838px;overflow:hidden;">Other</div>
<div class="t w" style="left:815.3px;top:292.6px;max-width:46.07329842931937px;overflow:hidden;">1991</div>
<div class="t w" style="left:859.5px;top:292.6px;max-width:48.16753926701571px;overflow:hidden;">8:16</div>
<div class="a" style="left:167px;top:313px;width:743px;height:22px;background:#eeeaee;"></div>
<div class="t al" style="left:170.7px;top:314.6px;max-width:263.8743455497382px;overflow:hidden;">What Time Is Love (The KLF Original ...</div>
<div class="t al" style="left:428.5px;top:314.6px;max-width:127.74869109947645px;overflow:hidden;">KLF, The</div>
<div class="t al" style="left:556.5px;top:314.6px;max-width:157.06806282722513px;overflow:hidden;transform:scaleX(0.973);">Doctorin' The Tardis</div>
<div class="t al" style="left:712px;top:314.6px;max-width:41.88481675392671px;overflow:hidden;">3</div>
<div class="t al" style="left:758px;top:314.6px;max-width:52.35602094240838px;overflow:hidden;">Other</div>
<div class="t al" style="left:815.3px;top:314.6px;max-width:46.07329842931937px;overflow:hidden;">1991</div>
<div class="t al" style="left:859.5px;top:314.6px;max-width:48.16753926701571px;overflow:hidden;">7:08</div>
<div class="t w" style="left:170.7px;top:336.6px;max-width:263.8743455497382px;overflow:hidden;">Gary Joins The JAMS</div>
<div class="t w" style="left:428.5px;top:336.6px;max-width:127.74869109947645px;overflow:hidden;">KLF, The</div>
<div class="t w" style="left:556.5px;top:336.6px;max-width:157.06806282722513px;overflow:hidden;transform:scaleX(0.973);">Doctorin' The Tardis</div>
<div class="t w" style="left:712px;top:336.6px;max-width:41.88481675392671px;overflow:hidden;">4</div>
<div class="t w" style="left:758px;top:336.6px;max-width:52.35602094240838px;overflow:hidden;">Other</div>
<div class="t w" style="left:815.3px;top:336.6px;max-width:46.07329842931937px;overflow:hidden;">1991</div>
<div class="t w" style="left:859.5px;top:336.6px;max-width:48.16753926701571px;overflow:hidden;">3:30</div>
<div class="a" style="left:167px;top:357px;width:743px;height:22px;background:#eeeaee;"></div>
<div class="t al" style="left:170.7px;top:358.6px;max-width:263.8743455497382px;overflow:hidden;">Doctorin' The Tardis (Instrumental)</div>
<div class="t al" style="left:428.5px;top:358.6px;max-width:127.74869109947645px;overflow:hidden;">KLF, The</div>
<div class="t al" style="left:556.5px;top:358.6px;max-width:157.06806282722513px;overflow:hidden;transform:scaleX(0.973);">Doctorin' The Tardis</div>
<div class="t al" style="left:712px;top:358.6px;max-width:41.88481675392671px;overflow:hidden;">5</div>
<div class="t al" style="left:758px;top:358.6px;max-width:52.35602094240838px;overflow:hidden;">Other</div>
<div class="t al" style="left:815.3px;top:358.6px;max-width:46.07329842931937px;overflow:hidden;">1991</div>
<div class="t al" style="left:859.5px;top:358.6px;max-width:48.16753926701571px;overflow:hidden;">4:31</div>
<div class="a" style="left:910px;top:134px;width:1px;height:607px;background:#b4b0b4;"></div>
<div class="a" style="left:911px;top:134px;width:1px;height:608px;background:#e2dee2;"></div>
<div class="a" style="left:6px;top:745px;width:903px;height:32px;background:#fff;"></div>
<div class="a" style="left:6px;top:745px;width:903px;height:1px;background:#3c3a3c;"></div>
<div class="a" style="left:6px;top:745px;width:1px;height:30px;background:#3c3a3c;"></div>
<div class="a" style="left:7px;top:746px;width:772px;height:29px;background:#aeaaae;border:1px solid #3c3a3c;"></div>
<div class="a" style="left:8px;top:747px;width:770px;height:1px;background:#fff;"></div>
<div class="a" style="left:8px;top:747px;width:1px;height:27px;background:#fff;"></div>
<div class="a" style="left:780px;top:746px;width:97px;height:29px;background:#aeaaae;border:1px solid #3c3a3c;"></div>
<div class="a" style="left:781px;top:747px;width:95px;height:1px;background:#fff;"></div>
<div class="a" style="left:781px;top:747px;width:1px;height:27px;background:#fff;"></div>
<div class="a" style="left:878px;top:746px;width:29px;height:29px;background:#aeaaae;border:1px solid #3c3a3c;"></div>
<div class="a" style="left:879px;top:747px;width:27px;height:1px;background:#fff;"></div>
<div class="a" style="left:879px;top:747px;width:1px;height:27px;background:#fff;"></div>
<div class="a" style="left:879px;top:747px;width:2px;height:27px;background:#fff;"></div>
<div class="a" style="left:879px;top:747px;width:27px;height:2px;background:#fff;"></div>
<div class="a" style="left:905px;top:747px;width:1px;height:27px;background:#fff;"></div>
<div class="a" style="left:879px;top:773px;width:27px;height:1px;background:#fff;"></div>
<div class="a" style="left:881px;top:749px;width:24px;height:24px;background:#aeaaae;border:1px solid #3c3a3c;"></div>
<div class="t" style="left:15.5px;top:752px;">Collection List</div>
<div class="t" style="left:721px;top:752px;">Starfield</div>
<div class="t" style="left:788px;top:752px;;transform:scaleX(0.925);">01:19 / 01:42</div>
<svg class="a" style="left:885.5px;top:753.5px" width="15" height="15" viewBox="0 0 15 15"><circle cx="7.5" cy="7.5" r="7.2" fill="url(#gball)" stroke="#3a74e0" stroke-width="0.6"/><path d="M7.5 2.6 L11.8 7 L10.6 8 L8.6 6.2 V12.6 H6.4 V6.2 L4.4 8 L3.2 7 Z" fill="#fff"/></svg>
<div class="a" style="left:199px;top:388px;width:448px;height:269px;background:#000;"></div>
<div class="a" style="left:203px;top:410px;width:440px;height:243px;background:#aeaaae;"></div>
<svg class="a" style="left:203px;top:391px" width="16" height="17" viewBox="0 0 16 17"><path d="M0.3 10.5 L7.3 4 L12.2 6.2 L12 10 L5 16 Z" fill="#f4eca8"/><path d="M4.6 8 L8.2 10.6 L4.9 12.8 Z" fill="#1a1000"/><circle cx="9.6" cy="6" r="1" fill="#000"/><path d="M9.6 5.6 C9.6 1 14.6 0.8 14.4 5.6" fill="none" stroke="#444" stroke-width="0.8"/></svg>
<div class="t ns" style="left:222.5px;top:391.2px;font-weight:bold;color:#fff;transform:scaleX(0.965);">Create Search Playlist - JuK</div>
<div class="a" style="left:581px;top:391px;width:63px;height:18px;background:#fff;background:linear-gradient(90deg,#000 0px,#000 3px,#fff 23px,#fff 100%);"></div>
<div class="a" style="left:583px;top:392px;width:3px;height:3px;background:#000;"></div>
<div class="a" style="left:587px;top:392px;width:3px;height:3px;background:#000;"></div>
<div class="a" style="left:595px;top:392px;width:3px;height:3px;background:#000;"></div>
<div class="a" style="left:583px;top:396px;width:3px;height:3px;background:#000;"></div>
<div class="a" style="left:587px;top:396px;width:3px;height:3px;background:#fff;"></div>
<div class="a" style="left:591px;top:396px;width:3px;height:3px;background:#000;"></div>
<div class="a" style="left:599px;top:396px;width:3px;height:3px;background:#000;"></div>
<div class="a" style="left:583px;top:400px;width:3px;height:3px;background:#000;"></div>
<div class="a" style="left:587px;top:400px;width:3px;height:3px;background:#000;"></div>
<div class="a" style="left:591px;top:400px;width:3px;height:3px;background:#fff;"></div>
<div class="a" style="left:595px;top:400px;width:3px;height:3px;background:#fff;"></div>
<div class="a" style="left:583px;top:404px;width:3px;height:3px;background:#000;"></div>
<div class="a" style="left:587px;top:404px;width:3px;height:3px;background:#fff;"></div>
<div class="a" style="left:591px;top:404px;width:3px;height:3px;background:#fff;"></div>
<div class="a" style="left:595px;top:404px;width:3px;height:3px;background:#000;"></div>
<div class="a" style="left:599px;top:404px;width:3px;height:3px;background:#000;"></div>
<div class="a" style="left:612px;top:395px;width:10px;height:10px;background:#fff;border:2px solid #000;border-top-width:3px"></div>
<svg class="a" style="left:629px;top:396px" width="10" height="9" viewBox="0 0 10 9"><path d="M1 0.6 L9 7.8 M9 0.6 L1 7.8" stroke="#000" stroke-width="2.6"/></svg>
<div class="t" style="left:215.5px;top:423.8px;;transform:scaleX(0.91);">Playlist name:</div>
<div class="a" style="left:306px;top:421px;width:326px;height:23px;background:#fff;border:1px solid;border-color:#3c3a3c #dedade #dedade #3c3a3c;"></div>
<div class="a" style="left:307px;top:422px;width:324px;height:1px;background:#8a868a;"></div>
<div class="a" style="left:307px;top:422px;width:1px;height:21px;background:#8a868a;"></div>
<div class="t w" style="left:310.3px;top:423.8px;">Doctor Who Songs</div>
<div class="a" style="left:214px;top:459px;width:418px;height:151px;border:1px solid;border-color:#3c3a3c #fff #fff #3c3a3c;"></div>
<div class="a" style="left:215px;top:460px;width:416px;height:149px;border:1px solid;border-color:#fff #3c3a3c #3c3a3c #fff;"></div>
<div class="a" style="left:222px;top:452px;width:99px;height:16px;background:#aeaaae;"></div>
<div class="t" style="left:224.5px;top:450px;">Search Criteria</div>
<div class="a" style="left:225px;top:472px;width:396px;height:43px;border:1px solid;border-color:#3c3a3c #fff #fff #3c3a3c;"></div>
<div class="a" style="left:226px;top:473px;width:394px;height:41px;border:1px solid;border-color:#fff #3c3a3c #3c3a3c #fff;"></div>
<svg class="a" style="left:236.0px;top:486.8px" width="13" height="13" viewBox="0 0 13 13"><circle cx="6.5" cy="6.5" r="5.2" fill="#fff" stroke="#2c2a2c" stroke-width="1"/><circle cx="6.5" cy="6.5" r="2.9" fill="#000"/></svg>
<div class="t" style="left:254px;top:484.1px;">Match any of the following</div>
<svg class="a" style="left:430.0px;top:486.8px" width="13" height="13" viewBox="0 0 13 13"><circle cx="6.5" cy="6.5" r="5.2" fill="#fff" stroke="#2c2a2c" stroke-width="1"/></svg>
<div class="t" style="left:448px;top:484.1px;">Match all of the following</div>
<div class="a" style="left:225px;top:520px;width:102px;height:23px;background:#fff;border:1px solid;border-color:#3c3a3c #dedade #dedade #3c3a3c;"></div>
<div class="a" style="left:226px;top:521px;width:100px;height:1px;background:#8a868a;"></div>
<div class="a" style="left:226px;top:521px;width:1px;height:21px;background:#8a868a;"></div>
<div class="a" style="left:311px;top:522px;width:15px;height:19px;background:#aeaaae;border:1px solid;border-color:#c8c4c8 #8e8a8e #8e8a8e #c8c4c8;"></div>
<svg class="a" style="left:315px;top:530px" width="7" height="4" viewBox="0 0 7 4"><path d="M-0.2 0 H7.2 L3.5 4.2 Z" fill="#000"/></svg>
<div class="t w" style="left:230.5px;top:522px;transform:scaleX(.885);">&lt;All Visible&gt;</div>
<div class="a" style="left:333px;top:520px;width:149px;height:23px;background:#fff;border:1px solid;border-color:#3c3a3c #dedade #dedade #3c3a3c;"></div>
<div class="a" style="left:334px;top:521px;width:147px;height:1px;background:#8a868a;"></div>
<div class="a" style="left:334px;top:521px;width:1px;height:21px;background:#8a868a;"></div>
<div class="a" style="left:487px;top:520px;width:134px;height:23px;background:#fff;border:1px solid;border-color:#3c3a3c #dedade #dedade #3c3a3c;"></div>
<div class="a" style="left:488px;top:521px;width:132px;height:1px;background:#8a868a;"></div>
<div class="a" style="left:488px;top:521px;width:1px;height:21px;background:#8a868a;"></div>
<div class="a" style="left:605px;top:522px;width:15px;height:19px;background:#aeaaae;border:1px solid;border-color:#c8c4c8 #8e8a8e #8e8a8e #c8c4c8;"></div>
<svg class="a" style="left:609px;top:530px" width="7" height="4" viewBox="0 0 7 4"><path d="M-0.2 0 H7.2 L3.5 4.2 Z" fill="#000"/></svg>
<div class="t w" style="left:492.5px;top:522px;">Pattern Matching</div>
<div class="a" style="left:225px;top:544px;width:102px;height:23px;background:#fff;border:1px solid;border-color:#3c3a3c #dedade #dedade #3c3a3c;"></div>
<div class="a" style="left:226px;top:545px;width:100px;height:1px;background:#8a868a;"></div>
<div class="a" style="left:226px;top:545px;width:1px;height:21px;background:#8a868a;"></div>
<div class="a" style="left:311px;top:546px;width:15px;height:19px;background:#aeaaae;border:1px solid;border-color:#c8c4c8 #8e8a8e #8e8a8e #c8c4c8;"></div>
<svg class="a" style="left:315px;top:554px" width="7" height="4" viewBox="0 0 7 4"><path d="M-0.2 0 H7.2 L3.5 4.2 Z" fill="#000"/></svg>
<div class="t w" style="left:230.5px;top:546px;transform:scaleX(.885);">&lt;All Visible&gt;</div>
<div class="a" style="left:333px;top:544px;width:149px;height:23px;background:#fff;border:1px solid;border-color:#3c3a3c #dedade #dedade #3c3a3c;"></div>
<div class="a" style="left:334px;top:545px;width:147px;height:1px;background:#8a868a;"></div>
<div class="a" style="left:334px;top:545px;width:1px;height:21px;background:#8a868a;"></div>
<div class="a" style="left:487px;top:544px;width:134px;height:23px;background:#fff;border:1px solid;border-color:#3c3a3c #dedade #dedade #3c3a3c;"></div>
<div class="a" style="left:488px;top:545px;width:132px;height:1px;background:#8a868a;"></div>
<div class="a" style="left:488px;top:545px;width:1px;height:21px;background:#8a868a;"></div>
<div class="a" style="left:605px;top:546px;width:15px;height:19px;background:#aeaaae;border:1px solid;border-color:#c8c4c8 #8e8a8e #8e8a8e #c8c4c8;"></div>
<svg class="a" style="left:609px;top:554px" width="7" height="4" viewBox="0 0 7 4"><path d="M-0.2 0 H7.2 L3.5 4.2 Z" fill="#000"/></svg>
<div class="t w" style="left:492.5px;top:546px;">Normal Matching</div>
<div class="t w" style="left:337.5px;top:522px;">doctor</div>
<div class="a" style="left:377px;top:524px;width:1px;height:16px;background:#000;"></div>
<div class="a" style="left:225px;top:574px;width:80px;height:24px;background:#aeaaae;border:1px solid #3c3a3c;"></div>
<div class="a" style="left:226px;top:575px;width:78px;height:22px;border:1px solid;border-color:#dedade #8a868a #8a868a #dedade;"></div>
<div class="tc" style="left:115.0px;top:576.7px;">Clear</div>
<div class="a" style="left:457px;top:574px;width:78px;height:24px;background:#aeaaae;border:1px solid #3c3a3c;"></div>
<div class="a" style="left:458px;top:575px;width:76px;height:22px;border:1px solid;border-color:#dedade #8a868a #8a868a #dedade;"></div>
<div class="tc" style="left:346.0px;top:576.7px;">More</div>
<div class="a" style="left:542px;top:574px;width:78px;height:24px;background:#aeaaae;border:1px solid #3c3a3c;"></div>
<div class="a" style="left:543px;top:575px;width:76px;height:22px;border:1px solid;border-color:#dedade #8a868a #8a868a #dedade;"></div>
<div class="tc" style="left:432px;top:576.7px;">Fewer</div>
<div class="a" style="left:466px;top:616px;width:80px;height:26px;background:#000;"></div>
<div class="a" style="left:468px;top:618px;width:76px;height:22px;background:#aeaaae;"></div>
<div class="a" style="left:468px;top:618px;width:76px;height:1px;background:#fff;"></div>
<div class="a" style="left:468px;top:618px;width:1px;height:22px;background:#fff;"></div>
<div class="a" style="left:469px;top:639px;width:75px;height:1px;background:#7c807c;"></div>
<div class="a" style="left:543px;top:619px;width:1px;height:21px;background:#8e8a8e;"></div>
<div class="tc" style="left:366px;top:620px;"><u>O</u>K</div>
<svg class="a" style="left:470px;top:622px" width="17" height="13" viewBox="0 0 17 13"><path d="M0 2.2 L5 6.8 L16 1 L16.3 1.8 L3.8 12.9 L2.6 12.6 Z" fill="#12d412" stroke="#0c960c" stroke-width="0.6" stroke-linejoin="round"/></svg>
<div class="a" style="left:553px;top:617px;width:78px;height:24px;background:#aeaaae;border:1px solid #3c3a3c;"></div>
<div class="a" style="left:554px;top:618px;width:76px;height:22px;border:1px solid;border-color:#dedade #8a868a #8a868a #dedade;"></div>
<div class="tc" style="left:451.5px;top:620px;"><u>C</u>ancel</div>
<svg class="a" style="left:556px;top:621px" width="16" height="16" viewBox="0 0 16 16"><path d="M1.5 3.5 L4 1 L8 5 L12.2 1 L14.8 3.6 L10.6 8 L15 12.2 L12.4 14.8 L8 10.4 L3.8 14.6 L1.2 12 L5.4 7.8 Z" fill="url(#gx)" stroke="#e84010" stroke-width="0.4"/></svg>
</body></html>
